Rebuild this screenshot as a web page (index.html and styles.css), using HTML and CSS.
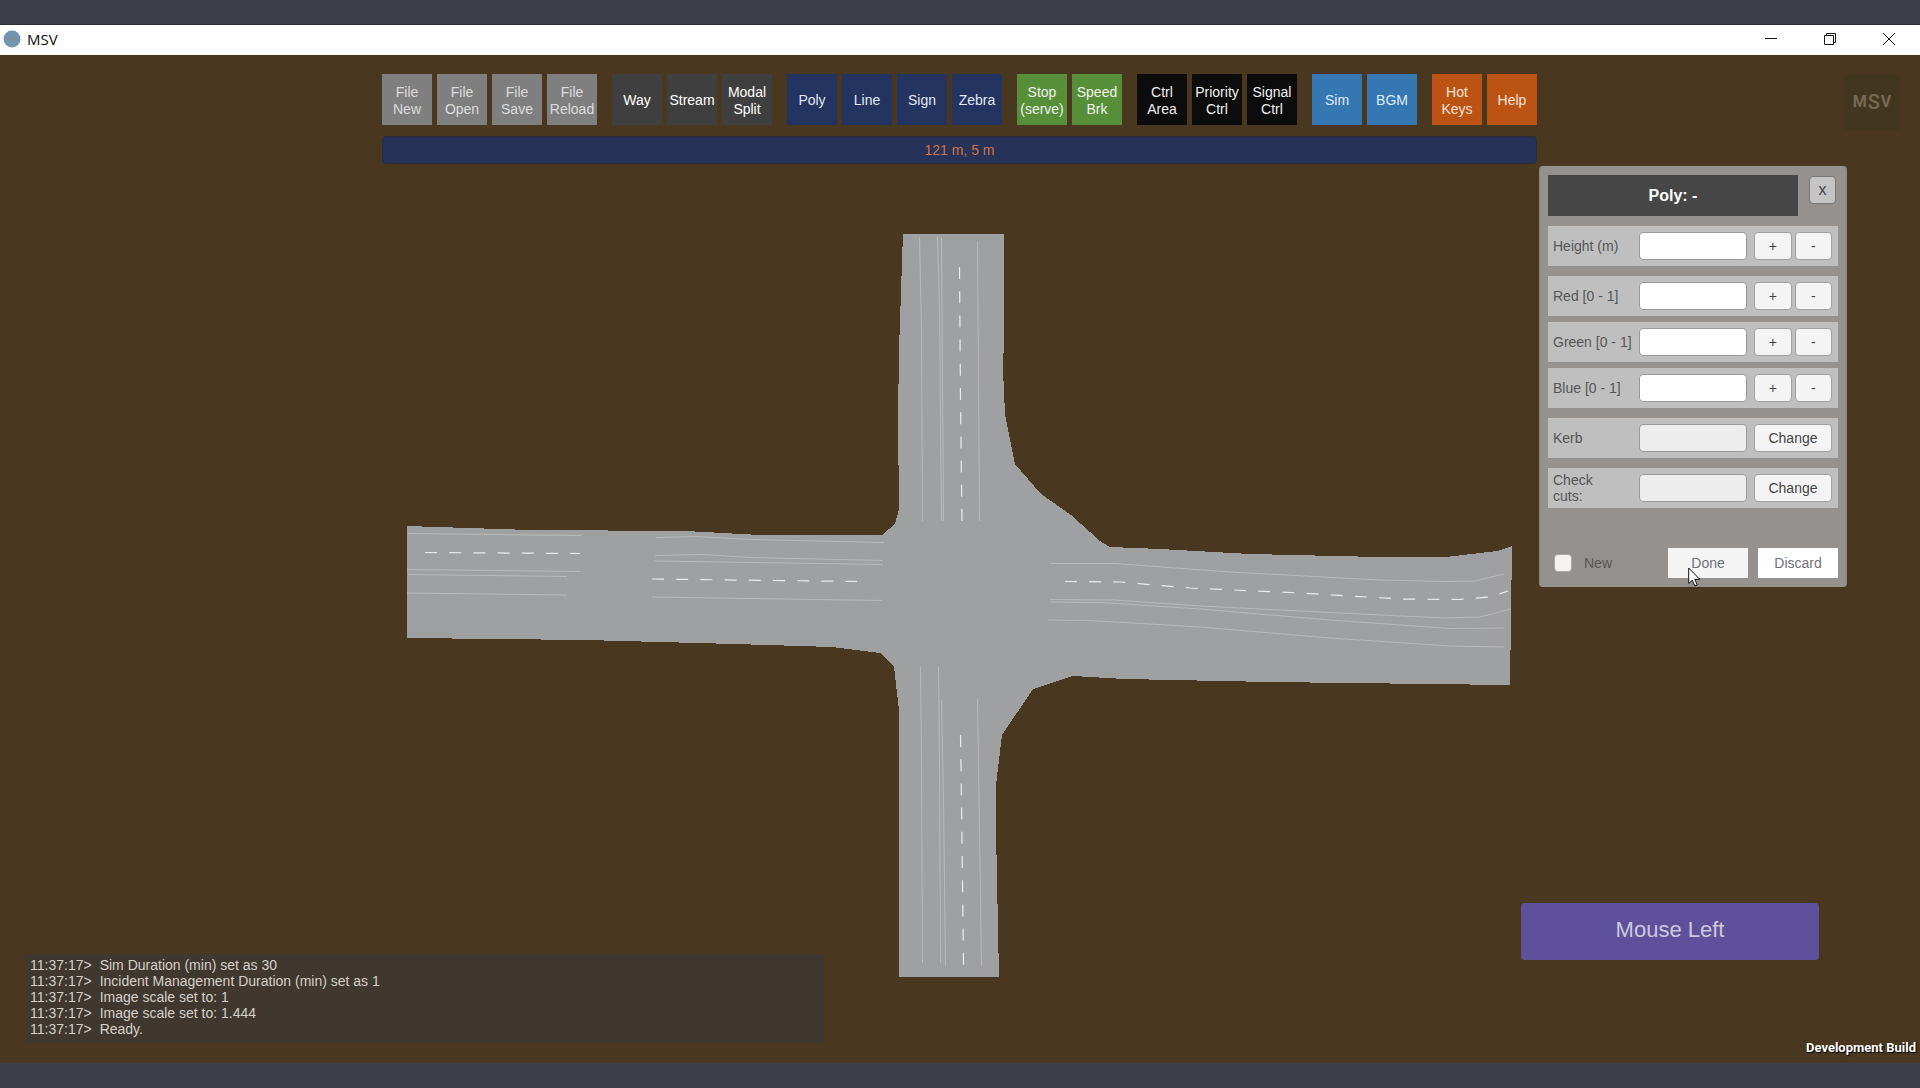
FILE: index.html
```
<!DOCTYPE html>
<html lang="en">
<head>
<meta charset="utf-8">
<title>MSV</title>
<link rel="stylesheet" href="styles.css">
</head>
<body>
<header class="titlebar">
  <svg class="app-icon" viewBox="0 0 18 18" aria-hidden="true"><circle cx="9" cy="9" r="8.5" fill="#7296b2"/><path d="M5 7v4M7 7v4M9 7v3M11 7v4M13 7l-1 4" stroke="#8b8a8c" stroke-width="1"/></svg>
  <h1 class="app-name">MSV</h1>
  <div class="window-controls">
    <button class="window-btn" aria-label="Minimize"><svg viewBox="0 0 12 12"><path d="M0 5.5h12"/></svg></button>
    <button class="window-btn" aria-label="Restore"><svg viewBox="0 0 12 12"><path d="M.5 2.500h9v9h-9zM2.500 2.500v-2h9v9h-2"/></svg></button>
    <button class="window-btn" aria-label="Close"><svg viewBox="0 0 12 12"><path d="M0 0l12 12M12 0L0 12"/></svg></button>
  </div>
</header>

<main class="stage">
  <svg class="map" viewBox="0 55 1920 1008" preserveAspectRatio="xMidYMin meet" aria-label="Junction">
    <polygon class="road" points="903,234 1004,234 1004,336 1003,370 1005,414 1015,464 1041,494 1071,515 1100,541 1110,547 1160,549 1250,554 1380,557 1446,557 1497,551 1512,546 1510,685 1270,682 1125,679 1073,676 1033,689 1002,735 996,785 996,830 999,977 899,977 899,820 899,710 894,667 880,653 832,647 735,644 585,640 407,638 407,526 530,530 686,531 760,535 882,535 895,524 899,509 898,420 899,350 902,262"/>
    <g class="lane">
      <path d="M919.500 237L921.500 330L922.500 521M937.500 237L939.500 310L941.500 521M941.500 238L943.500 521M977.500 242L979.500 521"/>
      <path d="M408 533.500L581 535.500M407 569.500L580 571.500M408 574.500L567 576.500M407 593L567 595"/>
      <path d="M656 537.500L695 536.500L750 539.500L884 542.500M655 555.500L702 554.500L750 557.500L883 560.500M654 561L883 564.500M652 597L882 600.500"/>
      <path d="M1050 563.500L1115 563.500L1230 572L1380 580L1445 581.500L1475 581L1504 574"/>
      <path d="M1050 599.500L1115 600L1200 606L1380 615L1445 618L1480 617L1511 609"/>
      <path d="M1050 602L1100 602.500L1200 609L1330 620L1450 628.500L1504 628"/>
      <path d="M1048 620L1090 620.500L1200 627L1330 638L1450 646L1504 647"/>
      <path d="M920.500 667L921.500 760L922.500 963M938.500 667L939.500 760L940.500 963M941.500 700L943.500 800L945.500 966M977.500 699L979.500 830L981.500 966"/>
    </g>
    <g class="dash">
      <path d="M959.500 267L960.500 400L962 521M425 552.500L580 553.500M652 579L857 581.500M960.500 735L961.500 800L963.500 965"/>
      <path d="M1065 581.500L1120 582L1190 588L1300 593L1400 599L1460 599.500L1490 597L1508 591"/>
    </g>
  </svg>

  <div class="top">
    <nav class="toolbar" aria-label="Tools">
      <div class="group file"><button>File<br>New</button><button>File<br>Open</button><button>File<br>Save</button><button>File<br>Reload</button></div>
      <div class="group traffic"><button>Way</button><button>Stream</button><button>Modal<br>Split</button></div>
      <div class="group shape"><button>Poly</button><button>Line</button><button>Sign</button><button>Zebra</button></div>
      <div class="group speed"><button>Stop<br>(serve)</button><button>Speed<br>Brk</button></div>
      <div class="group control"><button>Ctrl<br>Area</button><button>Priority<br>Ctrl</button><button>Signal<br>Ctrl</button></div>
      <div class="group sim"><button>Sim</button><button>BGM</button></div>
      <div class="group help"><button>Hot<br>Keys</button><button>Help</button></div>
    </nav>
    <div class="status">121 m, 5 m</div>
  </div>

  <div class="logo"><span>M</span><span class="logo-s">S</span><span>V</span></div>

  <form class="panel">
    <div class="panel-head">
      <h2 class="panel-title">Poly: -</h2>
      <button type="button" class="btn close">x</button>
    </div>
    <div class="row"><label for="height">Height (m)</label><input id="height" type="text"><div class="pair"><button type="button" class="btn">+</button><button type="button" class="btn">-</button></div></div>
    <div class="colours">
      <div class="row"><label for="red">Red [0 - 1]</label><input id="red" type="text"><div class="pair"><button type="button" class="btn">+</button><button type="button" class="btn">-</button></div></div>
      <div class="row"><label for="green">Green [0 - 1]</label><input id="green" type="text"><div class="pair"><button type="button" class="btn">+</button><button type="button" class="btn">-</button></div></div>
      <div class="row"><label for="blue">Blue [0 - 1]</label><input id="blue" type="text"><div class="pair"><button type="button" class="btn">+</button><button type="button" class="btn">-</button></div></div>
    </div>
    <div class="row"><label for="kerb">Kerb</label><input id="kerb" type="text" readonly><div class="pair"><button type="button" class="btn change">Change</button></div></div>
    <div class="row"><label for="cuts">Check<br>cuts:</label><input id="cuts" type="text" readonly><div class="pair"><button type="button" class="btn change">Change</button></div></div>
    <div class="panel-foot">
      <input id="new" type="checkbox"><label for="new">New</label>
      <button type="button" class="action done">Done</button>
      <button type="button" class="action">Discard</button>
      <svg class="cursor" viewBox="0 0 13 20" aria-hidden="true"><path d="M.7 1v15.500l3.600-3.300 2.600 5.800 2.400-1-2.500-5.600h5z" fill="#fff" stroke="#111" stroke-width="1"/></svg>
    </div>
  </form>

  <ul class="log">
    <li><time>11:37:17&gt;</time>Sim Duration (min) set as 30</li>
    <li><time>11:37:17&gt;</time>Incident Management Duration (min) set as 1</li>
    <li><time>11:37:17&gt;</time>Image scale set to: 1</li>
    <li><time>11:37:17&gt;</time>Image scale set to: 1.444</li>
    <li><time>11:37:17&gt;</time>Ready.</li>
  </ul>

  <div class="mouse-hint">Mouse Left</div>
  <div class="build">Development Build</div>
</main>
</body>
</html>
```

FILE: styles.css
```
* { box-sizing: border-box; }

body {
  margin: 0;
  min-height: 100vh;
  display: flex;
  flex-direction: column;
  padding: 24px 0 25px;
  background: #3d3e4a;
  font-family: "Liberation Sans", Arial, sans-serif;
  font-size: 14px;
  line-height: 16px;
}

button, input { font: inherit; margin: 0; }
button { padding: 0; border: 0; }

/* Window title bar */
.titlebar {
  display: flex;
  align-items: center;
  height: 31px;
  padding: 0 2px 2px 3px;
  background: #fff;
  border-top: 1px solid #2c2d36;
}
.app-icon { width: 18px; height: 18px; }
.app-name {
  margin: 0 0 0 6px;
  font: 400 15px/20px "Open Sans", sans-serif;
  color: #111;
}
.window-controls { display: flex; margin-left: auto; }
.window-btn {
  display: grid;
  place-items: center;
  width: 59px;
  height: 28px;
  background: none;
}
.window-btn svg {
  width: 12px;
  height: 12px;
  fill: none;
  stroke: #111;
  overflow: visible;
}

/* Drawing area */
.stage {
  position: relative;
  flex: 1;
  background: #49381f;
  overflow: hidden;
}
.map { position: absolute; inset: 0; width: 100%; height: 100%; }
.road { fill: #9fa0a2; shape-rendering: crispEdges; }
.lane { fill: none; stroke: #b9babc; }
.dash { fill: none; stroke: #ececec; stroke-width: 1.2; stroke-dasharray: 12 12.2; }

/* Toolbar and status line */
.top {
  position: relative;
  width: fit-content;
  margin: 0 auto;
  padding: 19px 1px 0 0;
}
.toolbar { display: flex; gap: 15px; }
.group { display: flex; gap: 5px; }
.group button {
  width: 50px;
  height: 51px;
  padding-top: 2px;
  font-size: 14px;
  line-height: 17px;
  white-space: nowrap;
  color: #f0f0f0;
}
.group.file button { background: #7f7f7f; color: #dcdcdc; }
.group.traffic button { background: #3f3f3f; color: #fff; }
.group.shape button { background: #22345f; color: #e3e8f2; }
.group.speed button { background: #578f38; }
.group.control button { background: #0c0c0c; }
.group.sim button { background: #3577b3; color: #dfeaf5; }
.group.help button { background: #bb5315; color: #f7e3d6; }
.status {
  margin-top: 11px;
  border: 1px solid #2c2d3c;
  border-radius: 4px;
  background: #263257;
  color: #cf7344;
  line-height: 26px;
  text-align: center;
}

.logo {
  position: absolute;
  top: 19px;
  right: 20px;
  display: flex;
  justify-content: center;
  align-items: center;
  gap: 1px;
  width: 56px;
  height: 56px;
  background: #43361f;
  color: #776a55;
  font: 700 16px/24px Roboto, sans-serif;
}
.logo-s { font-size: 20px; font-weight: 500; }

/* Polygon properties */
.panel {
  position: absolute;
  top: 111px;
  right: 73px;
  display: flex;
  flex-direction: column;
  gap: 10px;
  width: 308px;
  padding: 9px 8px;
  border: 1px solid #8a8680;
  border-width: 0 1px;
  border-radius: 4px;
  background: #94918f;
  color: #555;
}
.panel-head { display: flex; gap: 11px; align-items: flex-start; }
.panel-title {
  flex: 1;
  margin: 0;
  background: #464646;
  color: #fff;
  font-size: 16px;
  line-height: 41px;
  text-align: center;
}
.colours { display: flex; flex-direction: column; gap: 6px; }
.row {
  display: flex;
  align-items: center;
  height: 40px;
  padding: 0 6px 0 5px;
  background: #bfbfbf;
}
.row label { flex: 1; white-space: nowrap; }
.row input {
  width: 108px;
  height: 28px;
  padding: 0 8px;
  border: 1px solid #999;
  border-radius: 4px;
  background: #fff;
}
.row input:read-only { background: #ededed; }
.pair { display: flex; gap: 3px; width: 78px; margin-left: 7px; }
.btn {
  flex: 1;
  height: 28px;
  border: 1px solid #a0a0a0;
  border-radius: 4px;
  background: #f4f4f4;
  color: #444;
}
.close {
  flex: 0 0 27px;
  margin: 1px 2px 0 0;
  background: #c4c4c4;
  border-color: #777;
  font-size: 16px;
}
.panel-foot {
  position: relative;
  display: flex;
  align-items: center;
  gap: 10px;
  padding: 30px 0 0 6px;
}
.panel-foot input {
  appearance: none;
  width: 18px;
  height: 18px;
  border: 1px solid #aaa;
  border-radius: 4px;
  background: #f5f3f2;
}
.panel-foot label { flex: 1; padding-left: 2px; }
.action { width: 80px; height: 30px; background: #fff; color: #707278; }
.done { background: #f4f4f4; }
.cursor { position: absolute; left: 140px; top: 49px; width: 13px; height: 20px; }

/* Message log */
.log {
  position: absolute;
  left: 26px;
  bottom: 20px;
  width: 798px;
  max-width: 60%;
  height: 89px;
  margin: 0;
  padding: 3px 4px;
  list-style: none;
  background: #40372f;
  color: #d4d0ca;
}
.log time { margin-right: 8px; }

.mouse-hint {
  position: absolute;
  right: 101px;
  bottom: 103px;
  width: 298px;
  padding: 15px 0 18px;
  border-radius: 4px;
  background: #5e509a;
  color: #cdc9dd;
  font-size: 22px;
  line-height: 24px;
  text-align: center;
}
.build {
  position: absolute;
  right: 4px;
  bottom: 5px;
  color: #fff;
  font: 700 13px/20px Roboto, sans-serif;
  text-shadow: 1px 1px 1px #000;
}
```
